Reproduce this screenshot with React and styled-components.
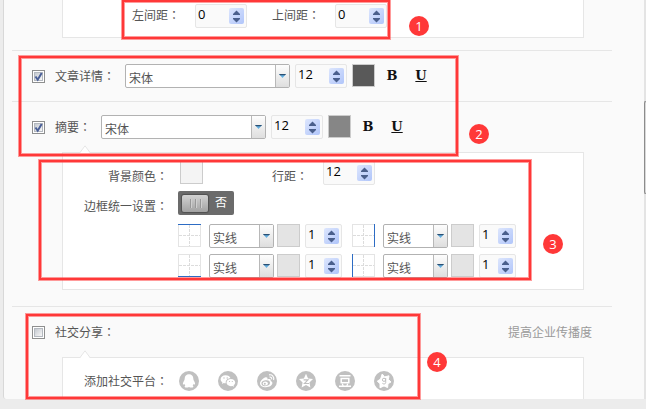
import { useId } from 'react'
import styled, { createGlobalStyle } from 'styled-components'

const colors = {
    page: '#ececec',
    panel: '#fafafa',
    line: '#e6e6e6',
    text: '#555',
    muted: '#999',
    grey: '#c0c0c0',
    blue: '#2d6cc4',
    red: '#ff3838',
}

const sans = '"Noto Sans CJK SC", "Open Sans", sans-serif'

// Components
function Colon() {
    return <StyledColon>：</StyledColon>
}

// Notch on the top edge of a sub box
function Notch() {
    return (
        <StyledNotch viewBox="0 0 12 9" aria-hidden="true">
            <path d="M0.5 9 L1.5 7.5 L6 0.8 L10.5 7.5 L11.5 9 Z" fill="#fff" />
            <path d="M1 7.5 L6 0.8 L11 7.5" fill="none" stroke={colors.line} />
        </StyledNotch>
    )
}

function Check({ id, checked }) {
    return (
        <CheckBox>
            <CheckInput id={id} type="checkbox" defaultChecked={checked} />
            <CheckMark viewBox="0 0 13 13" aria-hidden="true">
                <path d="M3.5 6.5 L5.7 9.7 L9.7 3" fill="none" stroke="#4a5f97" strokeWidth="2" />
            </CheckMark>
        </CheckBox>
    )
}

function Spinner({ value, label, id, small }) {
    return (
        <SpinnerBox $small={small}>
            <SpinnerInput id={id} type="number" defaultValue={value} aria-label={id ? undefined : label} />
            <SpinnerButtons>
                <SpinnerButton type="button" aria-label="增加">
                    <svg width="9" height="5" viewBox="0 0 9 5"><path d="M1 5 V4 L4.5 0.5 L8 4 V5 Z" fill="#4a5f8c" /></svg>
                </SpinnerButton>
                <SpinnerButton type="button" aria-label="减少">
                    <svg width="9" height="5" viewBox="0 0 9 5"><path d="M1 0 V1 L4.5 4.5 L8 1 V0 Z" fill="#4a5f8c" /></svg>
                </SpinnerButton>
            </SpinnerButtons>
        </SpinnerBox>
    )
}

function Dropdown({ value, label, small }) {
    return (
        <DropdownBox $small={small}>
            <DropdownSelect aria-label={label} defaultValue={value}>
                <option>{value}</option>
            </DropdownSelect>
            <DropdownArrow>
                <svg width="7" height="4" viewBox="0 0 7 4">
                    <path d="M0 0 H7 L3.5 4 Z" fill="#62aee0" />
                    <path d="M0 0 H7 L6 1.2 H1 Z" fill="#2b4f72" />
                </svg>
            </DropdownArrow>
        </DropdownBox>
    )
}

function FontRow({ label, color }) {
    const id = useId()
    return (
        <Row>
            <Check id={id} checked />
            <RowLabel htmlFor={id}>{label}<Colon /></RowLabel>
            <Tools>
                <Dropdown value="宋体" label="字体" />
                <Spinner value={12} label="字号" />
                <Swatch type="button" $color={color} aria-label="颜色" />
                <StyleButton type="button">B</StyleButton>
                <StyleButton type="button" $underline>U</StyleButton>
            </Tools>
        </Row>
    )
}

const edges = {
    top: 'M0 0.5 H23',
    right: 'M22.5 0 V23',
    bottom: 'M0 22.5 H23',
    left: 'M0.5 0 V23',
}

function BorderSetting({ side }) {
    return (
        <BorderCell>
            <BorderIcon viewBox="0 0 23 23" aria-hidden="true">
                <rect x="0.5" y="0.5" width="22" height="22" fill="#fff" stroke="#e4e4e4" />
                <path d="M1 11.5 H22 M11.5 1 V22" stroke="#dcdcdc" strokeDasharray="3 1" />
                <path d={edges[side]} stroke={colors.blue} />
            </BorderIcon>
            <Dropdown small value="实线" label="线型" />
            <BorderSwatch type="button" $color="#e4e4e4" aria-label="边框颜色" />
            <Spinner small value={1} label="边框宽度" />
        </BorderCell>
    )
}

const platforms = [
    { name: 'QQ', art: (
        <path fill="#fff" d="M10 3.2 C7.4 3.2 5.7 5 5.7 7.5 C5.7 8.6 5.4 9.2 4.8 10.2 C4 11.6 3.7 12.7 4 13.6 C4.4 13.7 4.8 13.2 5.2 12.7 C5.5 13.6 5.9 14.1 6.4 14.6 C5.7 15 5.5 15.4 5.7 15.9 C6.3 16.7 8.9 16.6 10 15.9 C11.1 16.6 13.7 16.7 14.3 15.9 C14.5 15.4 14.3 15 13.6 14.6 C14.1 14.1 14.5 13.6 14.8 12.7 C15.2 13.2 15.6 13.7 16 13.6 C16.3 12.7 16 11.6 15.2 10.2 C14.6 9.2 14.3 8.6 14.3 7.5 C14.3 5 12.6 3.2 10 3.2 Z" />
    ) },
    { name: '微信', art: (
        <>
            <path fill="#fff" d="M7.6 4.2 C4.7 4.2 2.6 6 2.6 8.3 C2.6 9.7 3.3 10.8 4.4 11.5 L4 13 L5.8 12.1 C6.5 12.3 7.1 12.4 7.8 12.3 C7.3 9.6 9.5 7.3 12.5 7.3 C12 5.4 10 4.2 7.6 4.2 Z" />
            <path fill="#fff" d="M12.9 8 C10.4 8 8.5 9.6 8.5 11.6 C8.5 13.6 10.4 15.2 12.9 15.2 L14.5 14.9 L16 15.8 L15.6 14.3 C16.6 13.6 17.2 12.7 17.2 11.6 C17.2 9.6 15.4 8 12.9 8 Z" />
            <g fill={colors.grey}>
                <circle cx="6" cy="7" r="0.7" /><circle cx="9.2" cy="7" r="0.7" />
                <circle cx="11.5" cy="10.5" r="0.6" /><circle cx="14.3" cy="10.5" r="0.6" />
            </g>
        </>
    ) },
    { name: '新浪微博', art: (
        <>
            <path fill="#fff" d="M8.8 6.3 C6.6 6.6 3 10 3 12.5 C3 14.8 5.8 16.2 8.8 16.2 C12.6 16.2 15.4 14.1 15.4 12 C15.4 10.7 14.4 10.1 13.6 9.9 C14.1 8.4 13.1 7.4 10.4 8.5 C10.8 7 10.3 6.1 8.8 6.3 Z" />
            <ellipse cx="8.7" cy="12.2" rx="4.3" ry="2.9" fill={colors.grey} transform="rotate(-8 8.7 12.2)" />
            <ellipse cx="8.3" cy="12.4" rx="2.6" ry="2" fill="#fff" />
            <circle cx="7.8" cy="12.7" r="1" fill={colors.grey} />
            <path fill="none" stroke="#fff" strokeWidth="1.1" d="M12 3.9 C15.4 3.2 17.4 6 16.6 9 M12.5 6.1 C14.2 5.9 15 7 14.6 8.4" />
        </>
    ) },
    { name: 'QQ空间', art: (
        <>
            <path fill="#fff" d="M10 2.8 L12.1 7.4 L17 8 L13.4 11.4 L14.4 16.4 L10 14 L5.6 16.4 L6.6 11.4 L3 8 L7.9 7.4 Z" />
            <path fill="none" stroke={colors.grey} strokeWidth="1.1" d="M7.6 8.9 H12 L8.4 12.5 H13" />
        </>
    ) },
    { name: '豆瓣', art: (
        <>
            <path fill="none" stroke="#fff" strokeWidth="1.4" d="M4.5 4.8 H15.5 M4 15.3 H16" />
            <rect x="6.2" y="7.5" width="7.6" height="4.2" fill="none" stroke="#fff" strokeWidth="1.5" />
            <path stroke="#fff" strokeWidth="1.3" d="M7.3 12.6 L8.1 15 M12.7 12.6 L11.9 15" />
        </>
    ) },
    { name: '人人', art: (
        <>
            <path fill="#fff" stroke="#fff" strokeWidth="1" strokeLinejoin="round" d="M8.2 3 L10.6 5.9 L15 4.8 L14.4 8.4 L17 11 L14 12.6 L13.6 16.6 L10 14.9 L6 16.8 L6 12.7 L3.3 10.2 L6.6 8 Z" />
            <circle cx="10" cy="8.8" r="1.6" fill="none" stroke={colors.grey} />
            <path fill="none" stroke={colors.grey} d="M11.7 7 V11.6 C11.7 13.2 9.2 13.3 8.4 12.3" />
        </>
    ) },
]

const marks = [
    { n: 1, left: 122, top: 0, width: 268, height: 39, dotLeft: 409, dotTop: 16 },
    { n: 2, left: 19, top: 56, width: 439, height: 100, dotLeft: 469, dotTop: 124 },
    { n: 3, left: 39, top: 160, width: 492, height: 120, dotLeft: 543, dotTop: 234 },
    { n: 4, left: 26, top: 314, width: 394, height: 85, dotLeft: 427, dotTop: 352 },
]

export default function App() {
    return (
        <Page>
            <GlobalStyle />
            <Panel>
                <Section>
                    <FirstBox>
                        <Field>
                            <label htmlFor="left-gap">左间距<Colon /></label>
                            <Spinner id="left-gap" value={0} />
                        </Field>
                        <Field>
                            <label htmlFor="top-gap">上间距<Colon /></label>
                            <Spinner id="top-gap" value={0} />
                        </Field>
                    </FirstBox>
                </Section>

                <Section>
                    <FontRow label="文章详情" color="#595959" />
                </Section>

                <Section>
                    <FontRow label="摘要" color="#868686" />
                    <SubBox>
                        <Notch />
                        <SubRow>
                            <SubLabel>背景颜色<Colon /></SubLabel>
                            <BackgroundCell>
                                <Swatch type="button" $color="#f4f4f4" aria-label="背景颜色" />
                            </BackgroundCell>
                            <LineField>
                                <LineLabel htmlFor="line-gap">行距<Colon /></LineLabel>
                                <Spinner id="line-gap" value={12} />
                            </LineField>
                        </SubRow>
                        <SubRow>
                            <SubLabel>边框统一设置<Colon /></SubLabel>
                            <Toggle type="button" role="switch" aria-checked="false">
                                <ToggleThumb><i /><i /><i /></ToggleThumb>
                                <ToggleText>否</ToggleText>
                            </Toggle>
                        </SubRow>
                        <BorderGrid>
                            <BorderSetting side="top" />
                            <BorderSetting side="right" />
                            <BorderSetting side="bottom" />
                            <BorderSetting side="left" />
                        </BorderGrid>
                    </SubBox>
                </Section>

                <Section>
                    <Row>
                        <Check id="share" />
                        <RowLabel htmlFor="share">社交分享<Colon /></RowLabel>
                        <Hint>提高企业传播度</Hint>
                    </Row>
                    <ShareBox>
                        <Notch />
                        <SubLabel>添加社交平台<Colon /></SubLabel>
                        <Platforms>
                            {platforms.map(({ name, art }) => (
                                <PlatformButton key={name} type="button" aria-label={name}>
                                    <svg width="20" height="20" viewBox="0 0 20 20">
                                        <circle cx="10" cy="10" r="10" fill={colors.grey} />
                                        {art}
                                    </svg>
                                </PlatformButton>
                            ))}
                        </Platforms>
                    </ShareBox>
                </Section>
            </Panel>
            <ScrollTrack><ScrollThumb /></ScrollTrack>

            {marks.map(m => (
                <div key={m.n}>
                    <MarkFrame $m={m} />
                    <MarkDot $m={m}>{m.n}</MarkDot>
                </div>
            ))}
        </Page>
    )
}

const GlobalStyle = createGlobalStyle`
    * {
        box-sizing: border-box;
    }

    body {
        background: ${colors.page};
        color: ${colors.text};
        font: 12px/18px ${sans};
        margin: 0;
    }

    button, input, select {
        color: inherit;
        font: inherit;
        margin: 0;
        padding: 0;
    }

    svg {
        display: block;
    }
`

const Page = styled.div`
    display: flex;
    overflow: hidden;
    padding: 0 0 10px 3px;
    position: relative;
`

const Panel = styled.main`
    background: ${colors.panel};
    border-left: 1px solid #d8d8d8;
    border-bottom-left-radius: 3px;
    flex: 1;
    min-width: 0;
    padding: 0 32px 0 8px;
`

const Section = styled.section`
    & + & {
        border-top: 1px solid ${colors.line};
        padding-top: 13px;
    }
`

const StyledColon = styled.span`
    font-family: "Noto Sans CJK JP", sans-serif;
`

const Row = styled.div`
    align-items: center;
    display: flex;
    height: 24px;
    margin-bottom: 13px;
    padding: 0 20px;
`

const RowLabel = styled.label`
    margin: 0 10px;
`

const Tools = styled.div`
    display: flex;
    gap: 5px;
`

const Hint = styled.span`
    color: ${colors.muted};
    margin-left: auto;
`

const SubBox = styled.div`
    background: #fff;
    border: 1px solid ${colors.line};
    display: flex;
    flex-direction: column;
    gap: 6px;
    margin: 0 28px 16px 50px;
    padding: 8px 0 11px;
    position: relative;
`

const FirstBox = styled(SubBox)`
    border-top: 0;
    flex-direction: row;
    gap: 25px;
    margin-bottom: 12px;
    padding: 4px 0 9px 69px;
`

const ShareBox = styled(SubBox)`
    align-items: center;
    border-bottom: 0;
    flex-direction: row;
    gap: 11px;
    margin-bottom: 0;
    padding: 8px 0 3px;
`

const Field = styled.div`
    display: flex;
    gap: 15px;
    line-height: 22px;
`

const SubRow = styled.div`
    display: flex;
    gap: 10px;
    height: 24px;
    line-height: 30px;
`

const SubLabel = styled.span`
    text-align: right;
    width: 105px;
`

const BackgroundCell = styled.div`
    padding-left: 2px;
    width: 84px;
`

const LineField = styled.div`
    display: flex;
    gap: 15px;
`

const LineLabel = styled.label`
    white-space: nowrap;
`

const StyledNotch = styled.svg`
    height: 9px;
    left: 16px;
    position: absolute;
    top: -8px;
    width: 12px;
`

const CheckBox = styled.span`
    display: grid;
    height: 13px;
    width: 13px;

    > * {
        grid-area: 1 / 1;
    }
`

const CheckInput = styled.input`
    appearance: none;
    background: linear-gradient(135deg, #c4c9d0, #f8f8f8) content-box, #fff;
    border: 1px solid #8e8f8f;
    height: 13px;
    outline: 1px solid #b4b9c0;
    outline-offset: -3px;
    padding: 2px;
    width: 13px;
`

const CheckMark = styled.svg`
    pointer-events: none;
    visibility: hidden;

    ${CheckInput}:checked + & {
        visibility: visible;
    }
`

const SpinnerBox = styled.span`
    align-items: center;
    background: ${colors.panel};
    border: 1px solid ${colors.line};
    border-radius: 2px;
    display: flex;
    height: 24px;
    padding: 0 2px;
    width: ${props => (props.$small ? 37 : 52)}px;
`

const SpinnerInput = styled.input`
    appearance: textfield;
    background: none;
    border: 0;
    color: #000;
    flex: 1;
    font: 13px/18px "Open Sans", sans-serif;
    height: 22px;
    min-width: 0;
    outline: 0;
    padding-bottom: 4px;

    &::-webkit-inner-spin-button {
        appearance: none;
        margin: 0;
    }
`

const SpinnerButtons = styled.span`
    background: linear-gradient(135deg, #dde6fd, #b0c5fa);
    border-radius: 2px;
    display: flex;
    flex-direction: column;
    height: 16px;
    width: 15px;
`

const SpinnerButton = styled.button`
    align-items: center;
    background: none;
    border: 0;
    display: flex;
    flex: 1;
    justify-content: center;
`

const DropdownBox = styled.span`
    background: #fff;
    border: 1px solid #b2b2b2;
    border-radius: 2px;
    display: grid;
    height: 24px;
    width: ${props => (props.$small ? 65 : 165)}px;

    > * {
        grid-area: 1 / 1;
    }
`

const DropdownSelect = styled.select`
    appearance: none;
    background: none;
    border: 0;
    height: 22px;
    line-height: 18px;
    outline: 0;
    padding: 4px 0 0 3px;
    width: 100%;
`

const DropdownArrow = styled.span`
    background: linear-gradient(#fdfdfd, #dedede);
    border-left: 1px solid #b8b8b8;
    display: grid;
    justify-self: end;
    place-items: center;
    pointer-events: none;
    width: 14px;
`

const Swatch = styled.button`
    background: ${props => props.$color};
    border: 1px solid #ccc;
    display: block;
    height: 23px;
    width: 23px;
`

const BorderSwatch = styled(Swatch)`
    margin: 0 5px 0 3px;
`

const StyleButton = styled.button`
    background: none;
    border: 0;
    color: #111;
    font: bold 13px/24px "DejaVu Serif", serif;
    text-decoration: ${props => (props.$underline ? 'underline' : 'none')};
    width: 24px;
`

const Toggle = styled.button`
    align-items: center;
    background: #6b6b6b;
    border: 0;
    border-radius: 2px;
    color: #fff;
    display: flex;
    height: 24px;
    padding: 0 7px 0 4px;
    width: 56px;
`

const ToggleThumb = styled.span`
    align-items: center;
    background: linear-gradient(#d2d2d2, #a2a2a2);
    border-radius: 2px;
    box-shadow: 0 0 1px 1px #505050;
    display: flex;
    gap: 4px;
    height: 17px;
    justify-content: center;
    width: 26px;

    i {
        background: #989898;
        box-shadow: 1px 0 #cfcfcf;
        height: 9px;
        width: 1px;
    }
`

const ToggleText = styled.span`
    flex: 1;
    line-height: 18px;
    padding-bottom: 2px;
    text-align: right;
`

const BorderGrid = styled.div`
    display: grid;
    gap: 6px 10px;
    grid-template-columns: repeat(2, max-content);
    margin: 3px 0 0 115px;
`

const BorderCell = styled.div`
    display: flex;
`

const BorderIcon = styled.svg`
    height: 23px;
    margin-right: 8px;
    width: 23px;
`

const Platforms = styled.div`
    align-items: center;
    display: flex;
    gap: 19px;
    height: 30px;
`

const PlatformButton = styled.button`
    background: none;
    border: 0;
`

const ScrollTrack = styled.div`
    background: #e4e4e4;
    width: 2px;
`

const ScrollThumb = styled.div`
    background: #d8d8d8;
    border: 1px solid #8c8c8c;
    border-radius: 2px 0 0 2px;
    border-right: 0;
    height: 93px;
    margin-top: 101px;
`

// Red frames and numbers laid over the form
const MarkFrame = styled.div`
    border: 2px solid ${colors.red};
    box-shadow: 0 0 0 1px #ff383880, inset 0 0 0 1px #ff383880;
    height: ${props => props.$m.height}px;
    left: ${props => props.$m.left}px;
    pointer-events: none;
    position: absolute;
    top: ${props => props.$m.top}px;
    width: ${props => props.$m.width}px;
`

const MarkDot = styled.span`
    background: ${colors.red};
    border-radius: 50%;
    color: #fff;
    font: 13px/20px "Open Sans", sans-serif;
    height: 20px;
    left: ${props => props.$m.dotLeft}px;
    position: absolute;
    text-align: center;
    top: ${props => props.$m.dotTop}px;
    width: 20px;
`
